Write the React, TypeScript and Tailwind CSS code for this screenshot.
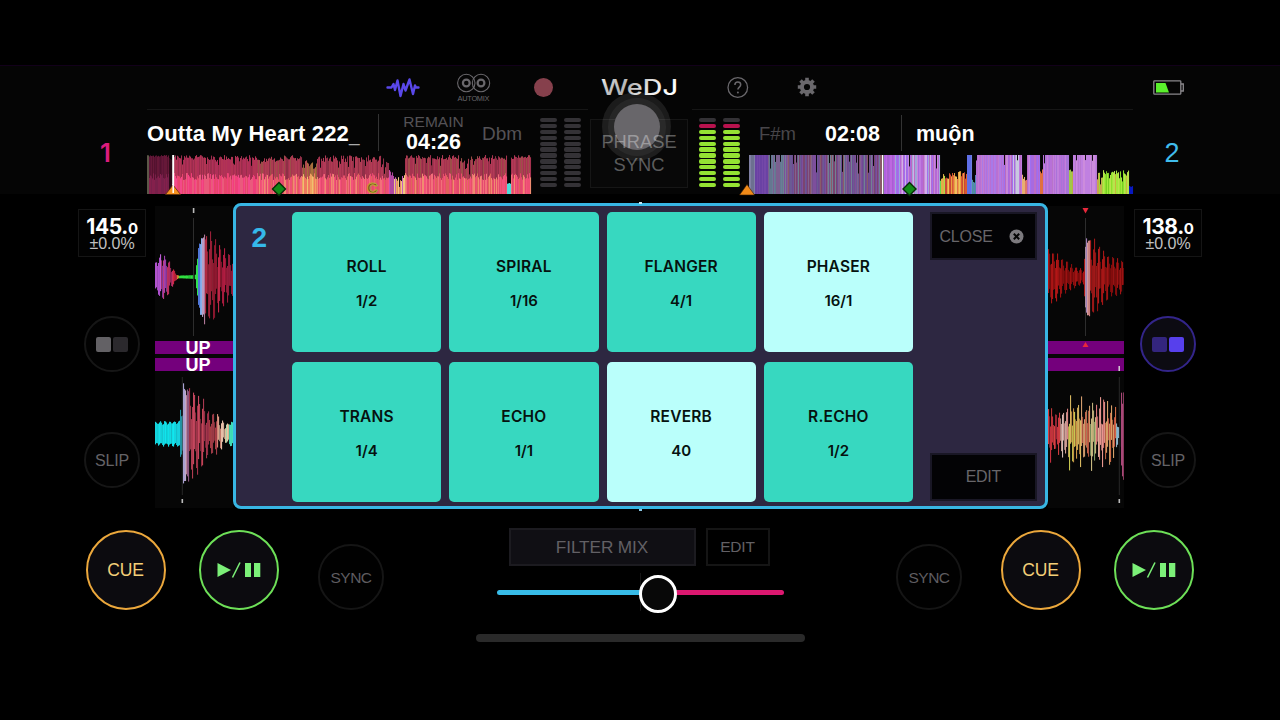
import type { ReactNode } from "react"

// Small seeded generator so the waveforms look the same on every render
function seeded(seed: number) {
  let s = seed
  return () => {
    s = (s * 1664525 + 1013904223) % 4294967296
    return s / 4294967296
  }
}

interface Segment {
  from: number
  to: number
  top: [number, number]
  colors: string[]
  inner?: string[]
  notch?: number
}

const CRIMSON = ["#a5324f", "#b23a57", "#8f2f47", "#a83450", "#9c4f48", "#ab3c50"]
const PINK = ["#ee4f74", "#e8506a", "#f2707a", "#f4527c", "#e0655c", "#e4496e", "#f08c70"]
const MAGENTA = ["#a52c50", "#b02f58", "#9a2d4c", "#b23454"]
const HOTPINK = ["#f0407a", "#f4488a", "#e8466c", "#ea5a7c"]
const MUTED = ["#6f4a94", "#7d4f9c", "#74508c", "#83618f", "#6b5a94", "#7b4470", "#718193", "#8a5a6a"]
const VIOLET = ["#b568d6", "#c07ae0", "#a86ae0", "#bd6fc8", "#c78ad8", "#9f70f0", "#b96ac0"]
const EMBER = ["#e8a040", "#d85a30", "#e07048", "#f0c060", "#c84838", "#e8885a"]
const LIME = ["#8ce02c", "#a4e83c", "#78d024", "#b8e44c", "#c8b83c"]

const OVERVIEW_ONE: Segment[] = [
  { from: 0, to: 2, top: [0, 1], colors: ["#5c5848"] },
  { from: 2, to: 22, top: [0, 2], colors: ["#5c1436", "#661838", "#54122e"], inner: ["#84204c", "#78204a"] },
  { from: 22, to: 25, top: [2, 5], colors: ["#2c0a18"] },
  { from: 26, to: 110, top: [0, 5], colors: MAGENTA, inner: HOTPINK },
  { from: 110, to: 155, top: [0, 7], colors: CRIMSON, inner: PINK },
  { from: 155, to: 170, top: [5, 14], colors: ["#a8703c", "#b04c50", "#94603c"], inner: ["#f0a060", "#f07a60", "#f0c070"] },
  { from: 170, to: 234, top: [0, 7], colors: CRIMSON, inner: PINK },
  { from: 234, to: 242, top: [3, 13], colors: CRIMSON, inner: PINK },
  { from: 242, to: 247, top: [15, 21], colors: ["#b048a0", "#d050b0"] },
  { from: 247, to: 258, top: [20, 26], colors: ["#e8b060", "#e88868", "#f0c880", "#c860c0"] },
  { from: 258, to: 312, top: [0, 5], colors: CRIMSON, inner: PINK },
  { from: 312, to: 324, top: [3, 14], colors: CRIMSON, inner: PINK },
  { from: 324, to: 360, top: [0, 5], colors: CRIMSON, inner: PINK },
  { from: 360, to: 364, top: [28, 30], colors: ["#50dcd8"] },
  { from: 364, to: 384, top: [0, 4], colors: CRIMSON, inner: PINK },
]

const OVERVIEW_TWO: Segment[] = [
  { from: 0, to: 6, top: [0, 0], colors: ["#6c7090", "#8080a4"] },
  { from: 6, to: 19, top: [0, 0], colors: ["#6a42a4", "#7448a8"] },
  { from: 19, to: 34, top: [0, 0], colors: ["#6a7c98", "#7c6090", "#647890"], notch: 0.15 },
  { from: 34, to: 80, top: [0, 0], colors: MUTED, notch: 0.08 },
  { from: 80, to: 133, top: [0, 0], colors: MUTED, notch: 0.09 },
  { from: 135, to: 146, top: [0, 0], colors: ["#b060e0", "#bd68e0", "#a860d0"] },
  { from: 146, to: 191, top: [0, 0], colors: [...VIOLET, "#a0a8d8", "#d0b0e8"], notch: 0.1 },
  { from: 191, to: 196, top: [18, 28], colors: ["#60d850", "#a8e048", "#e0b048"] },
  { from: 196, to: 218, top: [16, 24], colors: EMBER },
  { from: 218, to: 223, top: [0, 0], colors: ["#6070e8", "#7080e0"] },
  { from: 223, to: 227, top: [14, 28], colors: ["#5880b8", "#4c9898"] },
  { from: 227, to: 255, top: [0, 0], colors: ["#b870d4", "#a87ae8", "#b27ae4", "#c27cd0"], notch: 0.05 },
  { from: 255, to: 273, top: [0, 0], colors: [...VIOLET, "#c8c8e0", "#b8a0d8"], notch: 0.16 },
  { from: 273, to: 278, top: [16, 28], colors: ["#e07868", "#e8b070"] },
  { from: 278, to: 291, top: [0, 0], colors: VIOLET, notch: 0.15 },
  { from: 291, to: 294, top: [14, 20], colors: ["#d83c48", "#e07040"] },
  { from: 294, to: 320, top: [0, 0], colors: ["#b870d8", "#c080dc", "#b874c8", "#a874d8"], notch: 0.09 },
  { from: 320, to: 324, top: [12, 18], colors: ["#b8b040", "#a0c848"] },
  { from: 324, to: 348, top: [0, 0], colors: ["#c080e0", "#cc8cdc", "#b878d0"], notch: 0.08 },
  { from: 348, to: 354, top: [17, 24], colors: ["#c8a850", "#c8a848", "#a0d838"] },
  { from: 354, to: 380, top: [15, 21], colors: LIME },
  { from: 380, to: 384, top: [30, 32], colors: ["#0818c0"] },
]

function Overview({ segments, seed, children }: { segments: Segment[]; seed: number; children?: ReactNode }) {
  const rand = seeded(seed)
  const bars: ReactNode[] = []
  segments.forEach((seg) => {
    for (let x = seg.from; x < seg.to; x++) {
      const [lo, hi] = seg.top
      let top = lo + rand() * (hi - lo)
      if (hi > 1 && rand() < 0.08) top += 6
      if (seg.notch && rand() < seg.notch) top = 5 + rand() * 14
      const pick = seg.colors[Math.floor(rand() * seg.colors.length)]
      bars.push(<rect key={`b${x}`} x={x} y={top} width={1.05} height={39 - top} fill={pick} />)
      if (seg.inner) {
        const y = Math.max(top + 4, 18 + rand() * 7)
        bars.push(
          <rect key={`i${x}`} x={x} y={y} width={1.05} height={39 - y} fill={seg.inner[Math.floor(rand() * seg.inner.length)]} />,
        )
      }
    }
  })
  return (
    <svg width="385" height="39" className="block shrink-0 overflow-visible">
      {bars}
      {children}
    </svg>
  )
}

// [x, amplitude, spikiness, colours]
type Point = [number, number, number, string[]]

interface BeatWaveProps {
  points: Point[]
  cy: number
  seed: number
  period?: number
  jitter?: number
}

function BeatWave({ points, cy, seed, period = 4.6, jitter = 0.16 }: BeatWaveProps) {
  const rand = seeded(seed)
  const bars: ReactNode[] = []
  for (let i = 0; i < points.length - 1; i++) {
    const [x0, a0, spike, colors] = points[i]
    const [x1, a1] = points[i + 1]
    for (let x = x0; x < x1; x++) {
      const amp = a0 + ((a1 - a0) * (x - x0)) / (x1 - x0)
      const phase = Math.cos((x * Math.PI) / period) ** 2
      const back = Math.cos(((x + 1.4) * Math.PI) / period) ** 2
      const up = amp * (1 - spike + spike * phase) * (1.02 - jitter + rand() * jitter)
      const down = amp * (1 - spike + spike * back) * (1.02 - jitter + rand() * jitter)
      const color = colors[Math.floor(rand() * colors.length)]
      const opacity = 1 - spike * 0.6 * (1 - Math.max(phase, back))
      bars.push(<rect key={x} x={x} y={cy - up} width={1.1} height={up + down} fill={color} opacity={opacity} />)
    }
  }
  return <g>{bars}</g>
}

const TOP_LEFT: Point[] = [
  [0, 16, 0.4, ["#b050d0", "#c060d8", "#a048b8"]],
  [6, 25, 0.5, ["#a040b0", "#8c3ca8", "#c03c80"]],
  [12, 21, 0.6, ["#b02c68", "#c03060", "#90285c"]],
  [18, 9, 0.4, ["#d02840", "#c02040"]],
  [22, 2, 0.2, ["#c89030", "#d04030"]],
  [24, 1.4, 0, ["#28c838", "#30e040"]],
  [38, 2, 0, ["#10400c"]],
  [40, 2.5, 0, ["#30e050"]],
  [43, 30, 0, ["#5078d8", "#6090e8"]],
  [45, 38, 0, ["#88b0e8", "#7ca8ec"]],
  [47, 44, 0.1, ["#c0a0c8", "#b07898"]],
  [50, 48, 0.7, ["#b82c44", "#9a2038", "#a82038"]],
  [58, 48, 0.75, ["#b0203c", "#c02848", "#90182f"]],
  [66, 34, 0.7, ["#b01c40", "#981c3c"]],
  [78, 20, 0.6, ["#a81c38"]],
]

const TOP_RIGHT: Point[] = [
  [0, 31, 0.6, ["#a81414", "#8c0e0e", "#b41616"]],
  [12, 22, 0.65, ["#a01212", "#840c0c"]],
  [24, 13, 0.6, ["#a81414", "#840c0c"]],
  [35, 8, 0.3, ["#b01616"]],
  [37, 32, 0, ["#a080b8", "#b890a8"]],
  [39, 44, 0.1, ["#d8a0a0", "#c88080"]],
  [42, 42, 0.7, ["#b82020", "#a01818", "#901010"]],
  [52, 32, 0.7, ["#a81616", "#8c0e0e"]],
  [62, 22, 0.6, ["#a01414", "#840c0c"]],
  [77, 16, 0.6, ["#a01414"]],
]

const BOTTOM_LEFT: Point[] = [
  [0, 13, 0.25, ["#10e0e8", "#18d4e0", "#10e8f0"]],
  [24, 14, 0.2, ["#18d0e0"]],
  [25, 26, 0.1, ["#2098a8"]],
  [27, 18, 0, ["#305868"]],
  [28, 52, 0, ["#a8a0d0", "#c0a8c8"]],
  [31, 48, 0.1, ["#c088a0", "#8c5880"]],
  [34, 50, 0.7, ["#c84860", "#a03048", "#b03c50"]],
  [44, 42, 0.75, ["#c84858", "#9c3048", "#a83850"]],
  [54, 24, 0.7, ["#c84850", "#a03c48"]],
  [62, 22, 0.7, ["#e8a890", "#d88878", "#e8c0a8"]],
  [70, 10, 0.5, ["#e8c8a0", "#b0d8b0"]],
  [74, 13, 0.3, ["#40e0b8", "#30e8c8"]],
  [78, 13, 0.3, ["#40e0c0"]],
]

const BOTTOM_RIGHT: Point[] = [
  [0, 38, 0.7, ["#c83040", "#d84040", "#a02838"]],
  [9, 24, 0.6, ["#e03848", "#d03c40"]],
  [12, 34, 0.72, ["#e88888", "#d0a098", "#e8d0c8"]],
  [20, 38, 0.72, ["#d8b860", "#c8c850", "#d09848"]],
  [33, 40, 0.72, ["#e07858", "#d8a070", "#c86048"]],
  [42, 40, 0.72, ["#a0c880", "#c8b880", "#90b070"]],
  [48, 38, 0.72, ["#e89890", "#d87878", "#e8b8a0"]],
  [57, 38, 0.72, ["#d87048", "#d85848", "#d8a068"]],
  [68, 30, 0.5, ["#88b8d0", "#a8c8d8"]],
  [71, 1, 0, ["#101010"]],
  [73, 48, 0, ["#a84878", "#d890a8"]],
  [75, 50, 0, ["#88385c"]],
  [76, 50, 0, ["#88385c"]],
]

function Meter({ lit }: { lit: boolean }) {
  return (
    <div className="flex w-[17px] flex-col gap-[1.6px]">
      {Array.from({ length: 12 }, (_, i) => {
        const color = !lit || i === 0 ? "bg-[#343236]" : i === 1 ? "bg-[#b8124e]" : "bg-[#94e233]"
        return <div key={i} className={`h-[4.3px] rounded-[2px] ${color}`} />
      })}
    </div>
  )
}

function AutomixIcon() {
  return (
    <svg width="34" height="30" viewBox="0 0 34 30" fill="none" stroke="#6a686c">
      <circle cx="9.3" cy="10" r="8.7" strokeWidth="1.1" />
      <circle cx="24" cy="10" r="8.7" strokeWidth="1.1" />
      <circle cx="9.3" cy="10" r="3.4" strokeWidth="2.2" />
      <circle cx="24" cy="10" r="3.4" strokeWidth="2.2" />
      <text x="0.5" y="28.2" fontSize="7.4" textLength="32" fill="#6a686c" stroke="none" fontFamily="Liberation Sans, sans-serif">
        AUTOMIX
      </text>
    </svg>
  )
}

function Logo() {
  return (
    <svg width="78" height="20" className="overflow-visible">
      <defs>
        <linearGradient id="chrome" x1="0" y1="0" x2="1" y2="0.3">
          <stop offset="0" stopColor="#fff" />
          <stop offset="0.2" stopColor="#c8c8c8" />
          <stop offset="0.45" stopColor="#b4b4b4" />
          <stop offset="0.7" stopColor="#e4e4e4" />
          <stop offset="1" stopColor="#fff" />
        </linearGradient>
      </defs>
      <text x="0" y="17.3" fontSize="21.5" fontWeight="500" textLength="77" lengthAdjust="spacingAndGlyphs" fill="url(#chrome)" fontFamily="Inter, sans-serif">
        WeDJ
      </text>
    </svg>
  )
}

function GearIcon() {
  return (
    <svg width="20" height="20" viewBox="-10 -10 20 20" fill="none" stroke="#6a686c">
      <circle r="5.1" strokeWidth="4" />
      {[0, 45, 90, 135].map((deg) => (
        <g key={deg} transform={`rotate(${deg})`}>
          <path d="M0-9.200V-6M0 9.200V6" strokeWidth="3.600" />
        </g>
      ))}
    </svg>
  )
}

function Toolbar() {
  return (
    <div className="flex h-[43px] items-center pl-[239px]">
      <svg width="34" height="20" viewBox="0 0 34 20" fill="none" stroke="#5a48ea" strokeWidth="2.4" strokeLinejoin="round" strokeLinecap="round">
        <path d="M1.500 9.500H5.500L7.500 6 9 12 11.500 2.500 14.500 18 17.500 6 19.500 12.500 23.500 1.500 27 16 29 7.500 30 9.500H32.500" />
      </svg>
      <div className="ml-[37px] h-[30px]">
        <AutomixIcon />
      </div>
      <div className="ml-[43px] size-[19px] rounded-full bg-[#86404c]" />
      <div className="ml-[48px]">
        <Logo />
      </div>
      <svg width="22" height="22" viewBox="0 0 22 22" className="ml-[48px]" fill="none" stroke="#6a686c" strokeWidth="1.300">
        <circle cx="10.800" cy="10.500" r="9.800" />
        <path d="M7.900 8.100c0-1.900 1.200-3 2.900-3s2.900 1.100 2.900 2.700c0 2.200-2.800 2.400-2.800 4.800" strokeWidth="1.500" />
        <circle cx="10.900" cy="15.400" r="1" fill="#6a686c" stroke="none" />
      </svg>
      <div className="mb-[2px] ml-[48px]">
        <GearIcon />
      </div>
    </div>
  )
}

function Header() {
  return (
    <header className="flex h-[128px] shrink-0 bg-[#050505]">
      <div className="flex w-[147px] shrink-0 items-center pt-[45px] pl-[100px] font-['Inter',sans-serif] text-[26px] font-semibold text-[#dc1c7c]">
        1
      </div>
      <div className="flex w-[986px] shrink-0 flex-col">
        <Toolbar />
        <div className="flex h-[85px]">
          <section className="flex w-[385px] flex-col">
            <div className="-mr-[56px] h-px shrink-0 bg-[#161616]" />
            <div className="flex h-[45px] shrink-0 items-center">
              <div className="flex w-[232px] items-baseline border-r border-[#333] pt-[8px] pb-[4px] text-[22px] leading-[24px] font-bold whitespace-nowrap text-white">
                <span className="tracking-[0.15px]">Outta My Heart 222</span>
                <span className="text-[19px] font-normal text-[#aaa]">_</span>
              </div>
              <div className="w-[109px] pb-px text-center leading-[20px]">
                <div className="text-[15.5px] text-[#545256]">REMAIN</div>
                <div className="text-[21.5px] font-bold text-white">04:26</div>
              </div>
              <div className="-ml-[6px] pt-[3px] text-[19px] text-[#545256]">Dbm</div>
            </div>
            <Overview segments={OVERVIEW_ONE} seed={11}>
              <rect x="25.200" y="0" width="2" height="32" fill="#fff" />
              <path d="M26 30l7.500 9.500h-15z" fill="#f59220" stroke="#5a2c08" strokeWidth="0.800" />
              <path d="M26.200 29v9" stroke="#fff" strokeWidth="1.500" />
              <path d="M132 27.500l6.500 6.500-6.500 6.500-6.500-6.500z" fill="#128a18" stroke="#062c06" strokeWidth="1.400" />
              <text x="220" y="38" fontSize="15" fontWeight="bold" fill="#7a4424" stroke="#b8b030" strokeWidth="0.900" fontFamily="Liberation Sans, sans-serif">
                C
              </text>
            </Overview>
          </section>
          <div className="flex w-[217px] pt-[9px] pl-[8px]">
            <div className="flex gap-[7px]">
              <Meter lit={false} />
              <Meter lit={false} />
            </div>
            <div className="relative mt-px mr-[11px] ml-[9px] h-[69px] w-[98px] shrink-0 border border-[#161616] bg-[#080808] text-center text-[18.300px] leading-[22.500px] text-white/35">
              {/* Touch indicator under the finger */}
              <div className="absolute -top-[28px] left-[11px] flex size-[69px] items-center justify-center rounded-full bg-white/9">
                <div className="flex size-[58px] items-center justify-center rounded-full bg-white/5">
                  <div className="size-[46px] rounded-full bg-[#68666a]" />
                </div>
              </div>
              <div className="relative pt-[11px]">
                <div>PHRASE</div>
                <div>SYNC</div>
              </div>
            </div>
            <div className="flex gap-[7px]">
              <Meter lit />
              <Meter lit />
            </div>
          </div>
          <section className="flex w-[384px] flex-col">
            <div className="-ml-[57px] h-px shrink-0 bg-[#161616]" />
            <div className="flex h-[45px] shrink-0 items-center pt-px">
              <div className="w-[76px] pt-px pl-[10px] text-[18.500px] text-[#48464a]">F#m</div>
              <div className="flex h-[36px] w-[77px] items-center border-r border-[#333] pt-[2px] text-[21.500px] font-bold text-white">02:08</div>
              <div className="pt-[2px] pl-[14px] text-[21.500px] font-bold text-white">muộn</div>
            </div>
            <Overview segments={OVERVIEW_TWO} seed={29}>
              <rect x="133" y="0" width="1.500" height="39" fill="#fff" />
              <path d="M-2 29.500l7.500 10.500h-15z" fill="#f08a18" stroke="#3a1c04" strokeWidth="0.600" />
              <path d="M160.500 27.500l6.500 6.500-6.500 6.500-6.500-6.500z" fill="#128a18" stroke="#062c06" strokeWidth="1.400" />
            </Overview>
          </section>
        </div>
      </div>
      <div className="flex flex-1 flex-col pl-[20px]">
        <svg width="32" height="16" viewBox="0 0 32 16" className="mt-[14px]" fill="none" stroke="#8a888c" strokeWidth="1.300">
          <rect x="0.800" y="0.800" width="27" height="13.400" rx="0.800" />
          <path d="M28 4h2.300v7H28" />
          <path d="M3 3h9.500l3.500 9.500H3z" fill="#5af02c" stroke="none" />
        </svg>
        <div className="mt-[42px] pl-[11.500px] text-[27px] leading-[30px] text-[#40bcec]">2</div>
      </div>
    </header>
  )
}

function DeckSide({ bpm, active }: { bpm: string; active?: boolean }) {
  return (
    <div className="flex flex-col items-center">
      <div className="h-[48px] w-[68px] border border-[#151515] bg-[#020202] text-center text-white">
        <div className="mt-[8px] h-[18px] font-['Inter',sans-serif] text-[21px] leading-[18px] font-bold tracking-[-0.400px]">
          {bpm}.<span className="text-[15px]">0</span>
        </div>
        <div className="text-[16px] leading-[16px] text-[#c0c0c0]">±0.0%</div>
      </div>
      <div
        className={`mt-[59px] flex size-[56px] items-center justify-center gap-[2px] rounded-full border-2 ${
          active ? "border-[#33258a] bg-[#0c0b12]" : "border-[#161616] bg-[#020202]"
        }`}
      >
        <div className={`size-[15px] rounded-[2px] ${active ? "bg-[#33257e]" : "bg-[#636165]"}`} />
        <div className={`size-[15px] rounded-[2px] ${active ? "bg-[#5740ec]" : "bg-[#2b292d]"}`} />
      </div>
      <div className="mt-[60px] flex size-[56px] items-center justify-center rounded-full border-2 border-[#161616] bg-[#020202] pt-[2px] text-[16px] tracking-[-0.2px] text-[#656367]">
        SLIP
      </div>
    </div>
  )
}

function PhraseBars({ label }: { label?: string }) {
  return (
    <div className="flex flex-col gap-[4px] text-[18px] leading-[14px] font-bold text-white">
      <div className="h-[13px] bg-[#74007c] pl-[30.500px]">{label}</div>
      <div className="h-[13px] bg-[#74007c] pl-[30.500px]">{label}</div>
    </div>
  )
}

function WaveColumn({ side }: { side: "left" | "right" }) {
  const left = side === "left"
  const playTop = left ? 38.5 : 37.5
  const playBottom = left ? 27.3 : 71.3
  return (
    <div className="flex w-[78px] flex-col bg-[#060606]">
      <svg width="78" height="135" className="block">
        <BeatWave points={left ? TOP_LEFT : TOP_RIGHT} cy={71} seed={left ? 5 : 8} />
        <path d={`M${playTop} 12v118`} stroke="#888" strokeOpacity="0.3" />
        {left ? (
          <rect x="37.800" y="2" width="1.600" height="5" fill="#bbb" />
        ) : (
          <path d="M34.500 2h6l-3 5.500z" fill="#e8283c" />
        )}
      </svg>
      <div className="relative">
        <PhraseBars label={left ? "UP" : undefined} />
        {!left && (
          <svg width="78" height="30" className="absolute inset-0">
            <path d="M34.500 6h6l-3-5z" fill="#e8283c" />
            <rect x="70.500" y="25" width="1.400" height="5" fill="#ddd" />
          </svg>
        )}
      </div>
      <svg width="78" height="137" className="block">
        <BeatWave
          points={left ? BOTTOM_LEFT : BOTTOM_RIGHT}
          cy={62.5}
          seed={left ? 17 : 23}
          period={left ? 4.8 : 3.7}
          jitter={left ? 0.16 : 0.5}
        />
        <path d={`M${playBottom} 6v118`} stroke="#777" strokeOpacity="0.3" />
        <rect x={playBottom - 0.8} y="128" width="1.600" height="4" fill="#bbb" />
      </svg>
    </div>
  )
}

const PADS = [
  { name: "ROLL", value: "1/2" },
  { name: "SPIRAL", value: "1/16" },
  { name: "FLANGER", value: "4/1" },
  { name: "PHASER", value: "16/1", on: true },
  { name: "TRANS", value: "1/4" },
  { name: "ECHO", value: "1/1" },
  { name: "REVERB", value: "40", on: true },
  { name: "R.ECHO", value: "1/2" },
]

function PadPanel() {
  return (
    <div className="flex h-[306px] w-[814.500px] shrink-0 rounded-[8px] border-[3px] border-[#38b6e4] bg-[#2d2741]">
      <div className="w-[56px] shrink-0 pt-[17px] pl-[15.500px] text-[28px] leading-[30px] font-bold text-[#35b9ea]">2</div>
      <div className="grid w-[621px] shrink-0 grid-cols-4 grid-rows-2 gap-x-[8px] gap-y-[9.500px] pt-[5.500px] pb-[4px]">
        {PADS.map((pad) => (
          <button
            key={pad.name}
            className={`flex flex-col items-center justify-center gap-[14px] rounded-[5px] pt-[4px] font-['Inter',sans-serif] text-[15.500px] leading-[20px] font-semibold text-[#06120f] ${
              pad.on ? "bg-[#bafffb]" : "bg-[#37d8c0]"
            }`}
          >
            <span className="tracking-[0.200px]">{pad.name}</span>
            <span className="text-[15px]">{pad.value}</span>
          </button>
        ))}
      </div>
      <div className="flex flex-1 flex-col justify-between pt-[5.500px] pr-[8px] pb-[5.500px] pl-[17px] text-[16px] text-[#68666a]">
        <button className="flex h-[48px] items-center justify-between border-2 border-[#191725] bg-[#030305] pt-px pr-[11px] pl-[7.500px]">
          <span className="pt-px tracking-[-0.200px]">CLOSE</span>
          <svg width="15" height="15" viewBox="0 0 15 15">
            <circle cx="7.500" cy="7.500" r="7" fill="#7c7a7e" />
            <path d="M4.800 4.800l5.400 5.400M10.200 4.800l-5.400 5.400" stroke="#050505" strokeWidth="2" />
          </svg>
        </button>
        <button className="h-[48px] border-2 border-[#191725] bg-[#030305] tracking-[-0.300px]">EDIT</button>
      </div>
    </div>
  )
}

function CueButton() {
  return (
    <button className="flex size-[80px] items-center justify-center rounded-full border-2 border-[#eca83c] bg-[#0c0b0f] pr-px text-[17.500px] tracking-[-0.200px] text-[#f4cf78]">
      CUE
    </button>
  )
}

function PlayButton() {
  return (
    <button className="flex size-[80px] items-center justify-center rounded-full border-2 border-[#6ee058] bg-[#0c0b0f]">
      <svg width="44" height="16" viewBox="0 0 44 16" fill="#7cf078">
        <path d="M0.500 1l13.500 7-13.500 7z" />
        <path d="M15.500 15.500L23 0.500" stroke="#7cf078" strokeWidth="1.500" />
        <rect x="28" y="1" width="6" height="14" />
        <rect x="37" y="1" width="6.300" height="14" />
      </svg>
    </button>
  )
}

function SyncButton() {
  return (
    <button className="flex size-[66px] items-center justify-center rounded-full border-2 border-[#151515] bg-[#010101] pt-px text-[15.500px] tracking-[-0.500px] text-[#5e5c60]">
      SYNC
    </button>
  )
}

export default function App() {
  return (
    <div className="flex h-[720px] w-[1280px] flex-col overflow-hidden bg-black pt-[66px] font-['Liberation_Sans',Arial,sans-serif]">
      <div className="-mt-px h-px shrink-0 bg-[#12001a]" />
      <Header />

      {/* Waveforms with the pad panel covering their middle */}
      <main className="flex h-[336px] shrink-0 items-start">
        <div className="w-[155px] shrink-0 pt-[15px] pr-[9px] pl-[78px]">
          <DeckSide bpm="145" />
        </div>
        <div className="pt-[12px]">
          <WaveColumn side="left" />
        </div>
        <div className="relative pt-[9px]">
          <PadPanel />
          <div className="absolute top-[7.500px] left-[406px] h-[2px] w-[3px] bg-[#c8e8f4]" />
          <div className="absolute top-[315px] left-[406px] h-[2px] w-[3px] bg-[#8cc8e4]" />
        </div>
        <div className="w-[76.500px] overflow-hidden pt-[12px]">
          <WaveColumn side="right" />
        </div>
        <div className="pt-[15px] pl-[10px]">
          <DeckSide bpm="138" active />
        </div>
      </main>

      <footer className="flex h-[80px] shrink-0 items-end pr-[86px] pl-[86px]">
        <div className="flex items-end">
          <CueButton />
          <div className="mr-[39px] ml-[33px]">
            <PlayButton />
          </div>
          <SyncButton />
        </div>
        <div className="-mb-px flex flex-1 flex-col items-center">
          <div className="flex h-[38px] gap-[10px] pr-[2px] text-[#626065]">
            <button className="w-[187px] border-2 border-[#1c1b20] bg-[#100f14] pt-px text-[17.200px] tracking-[-0.100px]">FILTER MIX</button>
            <button className="w-[64px] border-2 border-[#151515] text-[15.500px] tracking-[-0.200px]">EDIT</button>
          </div>
          {/* Crossfader */}
          <div className="relative mt-[7px] flex h-[38px] w-[287px] items-center">
            <div className="h-[5px] w-[143px] rounded-l-full bg-[#38bce8]" />
            <div className="h-[38px] w-px bg-[#161616]" />
            <div className="h-[5px] flex-1 rounded-r-full bg-[#dc1870]" />
            <div className="absolute top-[1.500px] left-[142px] size-[38px] rounded-full border-[3px] border-white bg-[#080808]" />
          </div>
        </div>
        <div className="flex items-end">
          <SyncButton />
          <div className="mr-[33px] ml-[39px]">
            <CueButton />
          </div>
          <PlayButton />
        </div>
      </footer>

      <div className="mt-[24px] ml-[476px] h-[8px] w-[329px] shrink-0 rounded-full bg-[#2a2a2a]" />
    </div>
  )
}
